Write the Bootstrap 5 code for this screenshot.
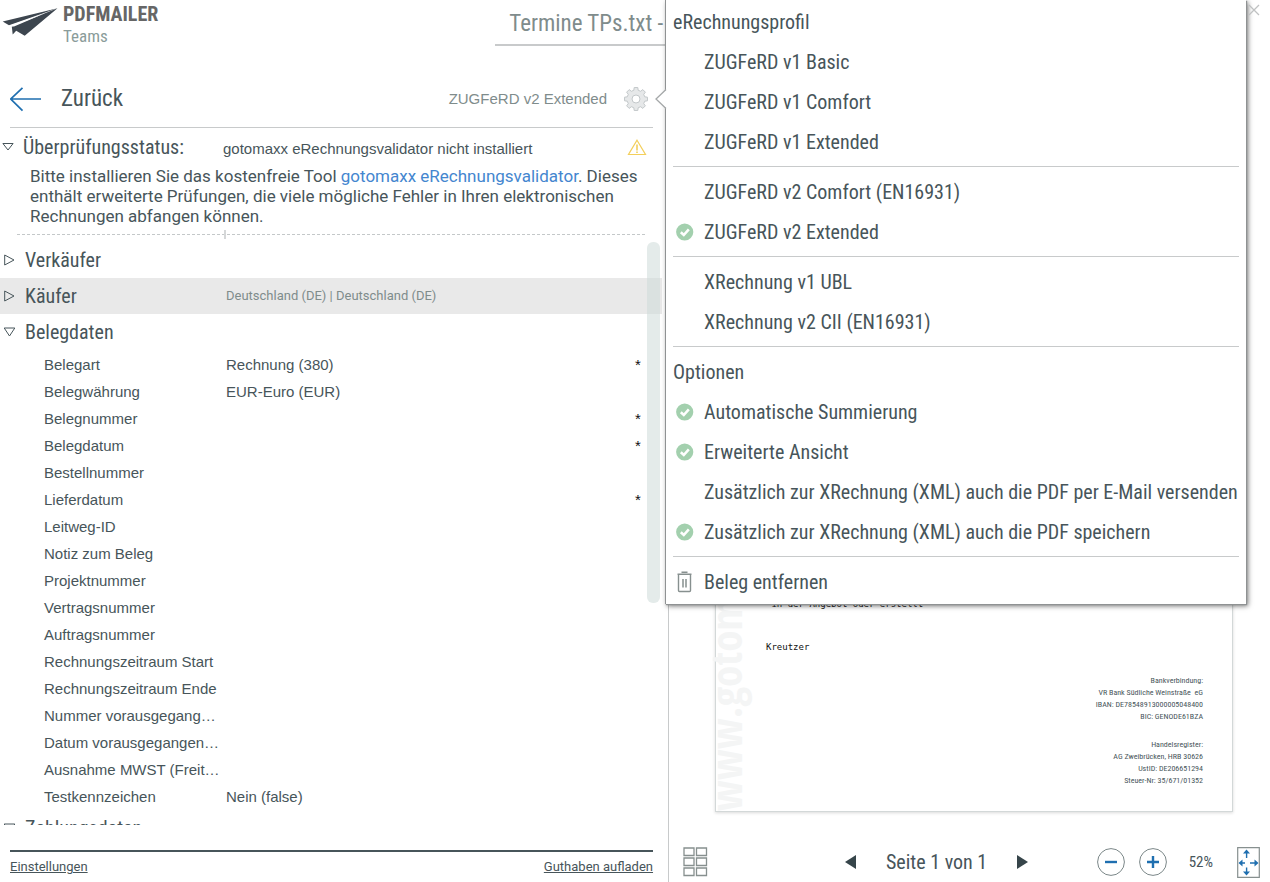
<!DOCTYPE html>
<html lang="de">
<head>
<meta charset="utf-8">
<meta name="viewport" content="width=device-width, initial-scale=1">
<title>PDFMAILER Teams</title>
<link href="https://cdn.jsdelivr.net/npm/bootstrap@5.3.0/dist/css/bootstrap.min.css" rel="stylesheet">
<style>
:root { --split: 52.68%; --ink: #47555a; --soft: #7f8c8c; --rule: #c8cacb; --blue: #1f6fb0; }
body { font-family: "Liberation Sans", Arial, sans-serif; font-size: 15px; color: var(--ink); background: #fff; }
button { color: inherit; }
.cond { font-family: "Roboto Condensed", Roboto, sans-serif; }
.robo { font-family: Roboto, sans-serif; }
.plain-btn { background: none; border: 0; padding: 0; }
.soft { color: var(--soft); }

.topbar { height: 46px; }
.brand { flex: 0 0 39%; gap: 5px; }
.brand-name { font-size: 20px; line-height: 22px; font-weight: 700; color: #666; }
.brand-sub { font-size: 17px; line-height: 22px; color: #8a9c9a; }
.brand svg { margin: 7px 0 0 2px; }
.brand-text { padding-top: 3px; }
.doc-title { font-size: 23px; line-height: 30px; padding: 9px 14px 5px; margin: 0 24px 0 0; color: var(--soft); border-bottom: 2px solid var(--rule); font-weight: 400; }
.close-btn { position: absolute; top: 4px; right: 10px; z-index: 5; line-height: 0; }

.work { min-height: 0; }
.left-pane { flex: 0 0 var(--split); border-right: 1px solid var(--rule); padding-top: 25px; }
.back-row { height: 57px; margin: 0 15px 0 10px; border-bottom: 1px solid var(--rule); }
.back-btn { font-size: 23px; gap: 20px; }
.status-row { height: 38px; padding: 0 21px 0 2px; }
.status-head { font-size: 20px; gap: 9px; width: 221px; }
.hint { font-size: 17px; line-height: 20px; margin: 0 16px 8px 30px; }
.hint a { color: #4486cf; text-decoration: none; }
.splitter { height: 1px; margin: 0 23px 7px 17px; background: repeating-linear-gradient(90deg, #c4c8c9 0 3px, transparent 3px 5px); }
.splitter i { position: absolute; left: 33%; top: -4px; width: 2px; height: 9px; background: #d5d7d8; }

.fields { min-height: 0; overflow: hidden; }
.group-btn { width: 100%; height: 36px; padding: 0 4px; text-align: left; }
.group-btn.hot { background: #e9e9e9; width: calc(100% - 6px); }
.group-title { width: 222px; gap: 10px; font-size: 20px; }
.group-info { font-size: 13px; color: var(--soft); }
.field-table { width: 100%; table-layout: fixed; margin-top: 1px; }
.field-table th { width: 226px; padding: 0 0 0 44px; font-weight: 400; white-space: nowrap; }
.field-table td { padding: 0; }
.field-table td:last-child { width: 33px; color: #111; }
.field-table tr { height: 27px; line-height: 27px; }
.thumb { position: absolute; top: 0; right: 8px; width: 13px; height: 62%; border-radius: 6px; background: rgba(205, 218, 216, .55); }

.foot { margin: 25px 15px 0 10px; border-top: 2px solid var(--ink); height: 32px; font-size: 13px; }
.foot a { color: var(--ink); }

.viewer { min-width: 0; }
.sheet { margin: 0 37px 0 46px; border: 1px solid #d3d8d8; box-shadow: 0 1px 3px rgba(0,0,0,.15); padding: 0 29px 24px 2px; }
.watermark { font-family: "Open Sans Condensed", Roboto, sans-serif; font-weight: 700; font-size: 43px; line-height: 50px; color: #f4f5f5; writing-mode: vertical-rl; transform: rotate(180deg); position: absolute; left: -15px; bottom: 0; white-space: nowrap; }
.typed { font-family: "DejaVu Sans Mono", monospace; font-size: 9px; line-height: 12px; color: #111; padding: 9px 0 0 48px; margin-bottom: 22px; }
.imprint { font-size: 8px; line-height: 12px; text-align: right; }
.imprint p { margin: 0 0 16px; }
.toolbar { height: 40px; margin-top: 30px; padding: 0 10px 0 14px; }
.gap-a { flex: 2; } .gap-b { flex: 1; }
.pager { gap: 30px; font-size: 20px; }
.zoomer { gap: 14px; }
.round { width: 28px; height: 28px; }
.level { font-size: 15px; margin: 0 10px 0 8px; }
.toolbar svg, .left-pane svg, .opt-menu svg { display: block; flex: none; }

.opt-menu { position: absolute; top: 0; left: calc(var(--split) - 4px); right: 24px; z-index: 4; background: #fff; border-left: 1px solid #8f9293; padding: 2px 7px; box-shadow: 1px 1px 1px #8f9293, 2px 2px 5px rgba(0,0,0,.55); font-size: 20px; line-height: 40px; }
.opt-menu hr { margin: 4px 0 5px; border-top: 1px solid var(--rule); opacity: 1; }
.opt-menu h2 { font-size: 20px; line-height: 40px; margin: 0; font-weight: 400; }
.opt { height: 40px; gap: 10px; padding-left: 3px; white-space: nowrap; cursor: pointer; width: 100%; }
.opt input { appearance: none; width: 18px; height: 18px; margin: 0; flex: none; }
.opt input:checked { background: url("data:image/svg+xml,%3Csvg xmlns='http://www.w3.org/2000/svg' viewBox='0 0 18 18'%3E%3Ccircle cx='8.7' cy='9' r='8.6' fill='%23a3d0ae'/%3E%3Cpath d='M4.8 9.2l3 2.8 5-5.6' fill='none' stroke='%23fff' stroke-width='2.6'/%3E%3C/svg%3E") center/18px no-repeat; }
.beak { position: absolute; left: -12px; top: 86px; }
</style>
</head>
<body>
<div class="vh-100 d-flex flex-column position-relative overflow-hidden">

  <header class="topbar d-flex flex-shrink-0">
    <div class="brand d-flex">
      <svg width="56" height="31" viewBox="0 0 56 31" fill="#3d464f"><path d="M.7 14.600L55.500 1.300 7 18.300z"/><path d="M9.800 19.600L55.500 1.300 22.700 28.800 14.200 23.800 10.700 27.600z"/><path d="M5 19.600L43 6.200 12 19.400z" fill="#fff"/></svg>
      <div class="cond brand-text">
        <div class="brand-name">PDFMAILER</div>
        <div class="brand-sub">Teams</div>
      </div>
    </div>
    <h1 class="doc-title cond flex-grow-1">Termine TPs.txt -</h1>
    <button class="plain-btn close-btn" type="button" aria-label="Schließen"><svg width="12" height="12" viewBox="0 0 12 12" stroke="#bfc1c2" stroke-width="1.300"><path d="M1 1l10 10M11 1L1 11"/></svg></button>
  </header>

  <div class="work d-flex flex-grow-1">
    <main class="left-pane d-flex flex-column">
      <div class="back-row d-flex align-items-center flex-shrink-0">
        <button class="plain-btn back-btn cond d-flex align-items-center" type="button">
          <svg width="31" height="25" viewBox="0 0 31 25" fill="none" stroke="#1f6fb0" stroke-width="1.700"><path d="M31 12H.8M12.500.8L.8 12l11.700 11.600"/></svg>Zurück</button>
        <span class="soft ms-auto">ZUGFeRD v2 Extended</span>
        <button class="plain-btn ms-3 me-1" type="button" aria-label="Profil wählen"><svg width="26" height="26" viewBox="-13 -13 26 26" fill="#e6e8e9" stroke="#c3c8ca" stroke-width="1"><path id="gear" stroke-linejoin="round"/><circle r="4" fill="#fff"/></svg></button>
      </div>

      <div class="status-row d-flex align-items-center flex-shrink-0">
        <button class="plain-btn status-head cond d-flex align-items-center" type="button"><svg width="12" height="10" viewBox="0 0 12 10" fill="none" stroke="#47555a"><path d="M.9 1.500h10.200L6 8z"/></svg>Überprüfungsstatus:</button>
        <span class="pt-1">gotomaxx eRechnungsvalidator nicht installiert</span>
        <svg class="ms-auto" width="20" height="17" viewBox="0 0 20 17" fill="none" stroke="#f3cf5b"><path d="M10 1.200L18.500 15.500h-17z" stroke-width="1.200"/><path d="M10 5.500v6M10 12.500v1.600" stroke-width="1.600"/></svg>
      </div>
      <p class="hint robo">Bitte installieren Sie das kostenfreie Tool <a href="#">gotomaxx eRechnungsvalidator</a>. Dieses enthält erweiterte Prüfungen, die viele mögliche Fehler in Ihren elektronischen Rechnungen abfangen können.</p>
      <div class="splitter position-relative flex-shrink-0"><i></i></div>

      <div class="fields flex-grow-1 position-relative">
        <button class="plain-btn group-btn d-flex align-items-center" type="button"><span class="group-title cond d-flex align-items-center"><svg width="11" height="12" viewBox="0 0 11 12" fill="none" stroke="#47555a"><path d="M.7 1v10L10 6z"/></svg>Verkäufer</span></button>
        <button class="plain-btn group-btn hot d-flex align-items-center" type="button"><span class="group-title cond d-flex align-items-center"><svg width="11" height="12" viewBox="0 0 11 12" fill="none" stroke="#47555a"><path d="M.7 1v10L10 6z"/></svg>Käufer</span><span class="group-info robo">Deutschland (DE) | Deutschland (DE)</span></button>
        <button class="plain-btn group-btn d-flex align-items-center" type="button"><span class="group-title cond d-flex align-items-center"><svg width="11" height="12" viewBox="0 0 11 12" fill="none" stroke="#47555a"><path d="M.2 2h10.600L5.500 10z"/></svg>Belegdaten</span></button>
        <table class="field-table">
          <tbody>
            <tr><th scope="row">Belegart</th><td>Rechnung (380)</td><td>*</td></tr>
            <tr><th scope="row">Belegwährung</th><td>EUR-Euro (EUR)</td><td></td></tr>
            <tr><th scope="row">Belegnummer</th><td></td><td>*</td></tr>
            <tr><th scope="row">Belegdatum</th><td></td><td>*</td></tr>
            <tr><th scope="row">Bestellnummer</th><td></td><td></td></tr>
            <tr><th scope="row">Lieferdatum</th><td></td><td>*</td></tr>
            <tr><th scope="row">Leitweg-ID</th><td></td><td></td></tr>
            <tr><th scope="row">Notiz zum Beleg</th><td></td><td></td></tr>
            <tr><th scope="row">Projektnummer</th><td></td><td></td></tr>
            <tr><th scope="row">Vertragsnummer</th><td></td><td></td></tr>
            <tr><th scope="row">Auftragsnummer</th><td></td><td></td></tr>
            <tr><th scope="row">Rechnungszeitraum Start</th><td></td><td></td></tr>
            <tr><th scope="row">Rechnungszeitraum Ende</th><td></td><td></td></tr>
            <tr><th scope="row">Nummer vorausgegang…</th><td></td><td></td></tr>
            <tr><th scope="row">Datum vorausgegangen…</th><td></td><td></td></tr>
            <tr><th scope="row">Ausnahme MWST (Freit…</th><td></td><td></td></tr>
            <tr><th scope="row">Testkennzeichen</th><td>Nein (false)</td><td></td></tr>
          </tbody>
        </table>
        <button class="plain-btn group-btn d-flex align-items-center" type="button"><span class="group-title cond d-flex align-items-center"><svg width="11" height="12" viewBox="0 0 11 12" fill="none" stroke="#47555a"><path d="M.2 2h10.600L5.500 10z"/></svg>Zahlungsdaten</span></button>
        <div class="thumb"></div>
      </div>

      <footer class="foot robo d-flex justify-content-between align-items-center flex-shrink-0">
        <a href="#">Einstellungen</a><a href="#">Guthaben aufladen</a>
      </footer>
    </main>

    <section class="viewer flex-grow-1 d-flex flex-column">
      <div class="sheet position-relative flex-grow-1 d-flex flex-column justify-content-end">
        <div class="watermark">www.gotomaxx.de</div>
        <div class="typed">&nbsp;in der Angebot oder erstellt</div>
        <div class="typed">Kreutzer</div>
        <div class="imprint cond">
          <p>Bankverbindung:<br>VR Bank Südliche Weinstraße&nbsp; eG<br>IBAN: DE78548913000005048400<br>BIC: GENODE61BZA</p>
          <div>Handelsregister:<br>AG Zweibrücken, HRB 30626<br>UstID: DE206651294<br>Steuer-Nr: 35/671/01352</div>
        </div>
      </div>
      <div class="toolbar d-flex align-items-center flex-shrink-0">
        <button class="plain-btn" type="button" aria-label="Seitenübersicht"><svg width="25" height="30" viewBox="0 0 25 30" fill="none" stroke="#87908f" stroke-width="1.300"><path d="M1 1h10v7.500H1zM13.500 1h10v7.500h-10zM1 11h10v7.500H1zM13.500 11h10v7.500h-10zM1 21h10v7.500H1zM13.500 21h10v7.500h-10z"/></svg></button>
        <div class="gap-a"></div>
        <div class="pager cond d-flex align-items-center">
          <button class="plain-btn" type="button" aria-label="Vorherige Seite"><svg width="11" height="14" viewBox="0 0 11 14" fill="#36454a"><path d="M11 0v14L0 7z"/></svg></button>
          <span>Seite 1 von 1</span>
          <button class="plain-btn" type="button" aria-label="Nächste Seite"><svg width="11" height="14" viewBox="0 0 11 14" fill="#36454a"><path d="M0 0v14l11-7z"/></svg></button>
        </div>
        <div class="gap-b"></div>
        <div class="zoomer d-flex align-items-center">
          <button class="plain-btn round" type="button" aria-label="Verkleinern"><svg width="28" height="28" viewBox="0 0 28 28" fill="none"><circle cx="14" cy="14" r="13.400" stroke="#7b8788"/><path d="M8 14h12" stroke="#1f6fb0" stroke-width="2.400"/></svg></button>
          <button class="plain-btn round" type="button" aria-label="Vergrößern"><svg width="28" height="28" viewBox="0 0 28 28" fill="none"><circle cx="14" cy="14" r="13.400" stroke="#7b8788"/><path d="M8 14h12M14 8v12" stroke="#1f6fb0" stroke-width="2.400"/></svg></button>
          <span class="level cond">52%</span>
          <button class="plain-btn" type="button" aria-label="Seite einpassen"><svg width="23" height="31" viewBox="0 0 23 31" fill="none"><path d="M.7.7h21.600v29.600H.7z" stroke="#87908f" stroke-width="1.200"/><g fill="#1f6fb0"><path d="M9.500 2.500l3.500 4H6zM9.500 28.500l3.500-4H6zM1.500 16l4-3.500v7zM21.500 16l-4-3.500v7z"/><path d="M8.900 6h1.400v5H8.900zM8.900 20.500h1.400v5H8.900zM5 15.300h3v1.400H5zM13 15.300h5v1.400h-5z"/></g></svg></button>
        </div>
      </div>
    </section>
  </div>

  <aside class="opt-menu cond">
    <svg class="beak" width="13" height="26" viewBox="0 0 13 26"><path d="M13 3L2.500 13 13 23z" fill="#fff"/><path d="M12 3.500L2 13l10 9.500" fill="none" stroke="#a5a8a9" stroke-width="1.300"/></svg>
    <h2>eRechnungsprofil</h2>
    <label class="opt d-flex align-items-center"><input type="radio" name="profil">ZUGFeRD v1 Basic</label>
    <label class="opt d-flex align-items-center"><input type="radio" name="profil">ZUGFeRD v1 Comfort</label>
    <label class="opt d-flex align-items-center"><input type="radio" name="profil">ZUGFeRD v1 Extended</label>
    <hr>
    <label class="opt d-flex align-items-center"><input type="radio" name="profil">ZUGFeRD v2 Comfort (EN16931)</label>
    <label class="opt d-flex align-items-center"><input type="radio" name="profil" checked>ZUGFeRD v2 Extended</label>
    <hr>
    <label class="opt d-flex align-items-center"><input type="radio" name="profil">XRechnung v1 UBL</label>
    <label class="opt d-flex align-items-center"><input type="radio" name="profil">XRechnung v2 CII (EN16931)</label>
    <hr>
    <h2>Optionen</h2>
    <label class="opt d-flex align-items-center"><input type="checkbox" checked>Automatische Summierung</label>
    <label class="opt d-flex align-items-center"><input type="checkbox" checked>Erweiterte Ansicht</label>
    <label class="opt d-flex align-items-center"><input type="checkbox">Zusätzlich zur XRechnung (XML) auch die PDF per E-Mail versenden</label>
    <label class="opt d-flex align-items-center"><input type="checkbox" checked>Zusätzlich zur XRechnung (XML) auch die PDF speichern</label>
    <hr>
    <button class="plain-btn opt d-flex align-items-center ps-1" type="button"><svg width="17" height="22" viewBox="1 0 17 22" fill="none" stroke="#87908f"><path d="M2.500 4v15.500q0 1 1 1h10q1 0 1-1V4" stroke-width="1.400"/><path d="M1.500 3.200h14M5.500 1.200h6" stroke-width="1.600"/><path d="M7 8v8.500M10 8v8.500" stroke-width="1.500"/></svg>Beleg entfernen</button>
  </aside>
</div>
<script src="https://cdn.jsdelivr.net/npm/bootstrap@5.3.0/dist/js/bootstrap.bundle.min.js"></script>
<script>
// Outline of the eight-toothed settings gear
const pts = [];
for (let i = 0; i < 8; i++) {
  [[-14, 9], [-9, 11.6], [9, 11.6], [14, 9]].forEach(([a, r]) => {
    const t = (i * 45 + a) * Math.PI / 180;
    pts.push((r * Math.cos(t)).toFixed(2) + ' ' + (r * Math.sin(t)).toFixed(2));
  });
}
document.getElementById('gear').setAttribute('d', 'M' + pts.join('L') + 'z');
</script>
</body>
</html>
